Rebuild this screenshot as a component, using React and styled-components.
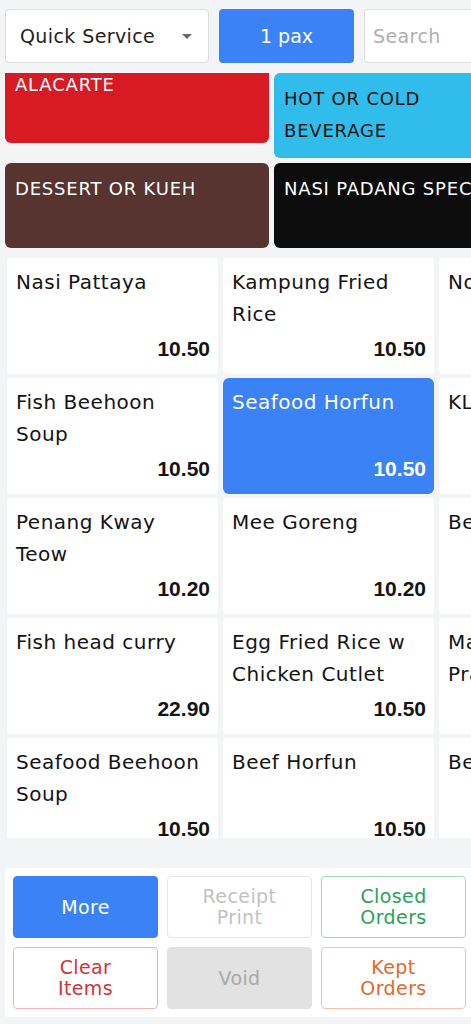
import styled, { createGlobalStyle } from 'styled-components'

const GlobalStyle = createGlobalStyle`
  * {
    box-sizing: border-box;
  }

  body {
    margin: 0;
    background: #f3f4f6;
    font-family: "DejaVu Sans", "Noto Sans", sans-serif;
  }
`

const categories = [
  { name: 'ALACARTE', bg: '#d71a24', color: '#fff', short: true },
  { name: 'HOT OR COLD BEVERAGE', bg: '#31bdeb', color: '#111' },
  { name: 'DESSERT OR KUEH', bg: '#573430', color: '#fff' },
  { name: 'NASI PADANG SPECIAL', bg: '#0c0c0c', color: '#fff' }
]

const items = [
  { name: 'Nasi Pattaya', price: '10.50' },
  { name: 'Kampung Fried Rice', price: '10.50' },
  { name: 'Nonya Mee Siam', price: '10.50' },
  { name: 'Fish Beehoon Soup', price: '10.50' },
  { name: 'Seafood Horfun', price: '10.50', active: true },
  { name: 'KL Hokkien Mee', price: '10.50' },
  { name: 'Penang Kway Teow', price: '10.20' },
  { name: 'Mee Goreng', price: '10.20' },
  { name: 'Beef Kway Teow', price: '10.50' },
  { name: 'Fish head curry', price: '22.90' },
  { name: 'Egg Fried Rice w Chicken Cutlet', price: '10.50' },
  { name: 'Mala Fried Rice w Prawns', price: '12.50' },
  { name: 'Seafood Beehoon Soup', price: '10.50' },
  { name: 'Beef Horfun', price: '10.50' },
  { name: 'Beef Noodles', price: '10.50' }
]

const actions = [
  { label: 'More', variant: 'primary' },
  { label: 'Receipt Print', variant: 'disabled' },
  { label: 'Closed Orders', variant: 'green' },
  { label: 'Clear Items', variant: 'red' },
  { label: 'Void', variant: 'grey' },
  { label: 'Kept Orders', variant: 'orange' }
]

const variants = {
  primary: { bg: '#3b82f6', border: '#3b82f6', color: '#fff' },
  disabled: { bg: '#fff', border: '#e6e6e6', color: '#c2c2c2' },
  green: { bg: '#fff', border: '#9fd9b4', color: '#2ea05a' },
  red: { bg: '#fff', border: '#f2b3b3', color: '#d2323a' },
  grey: { bg: '#e2e2e2', border: '#e2e2e2', color: '#a9a9a9' },
  orange: { bg: '#fff', border: '#f5c2a6', color: '#e0692c' }
}

export default function App() {
  return (
    <>
      <GlobalStyle />
      <Page>
        <TopBar>
          <Select>
            <span>Quick Service</span>
            <Caret />
          </Select>
          <PaxButton>1 pax</PaxButton>
          <SearchInput placeholder="Search" />
        </TopBar>

        <Categories>
          {categories.map((c) => (
            <CategoryTile key={c.name} $bg={c.bg} $color={c.color} $short={c.short}>
              {c.name}
            </CategoryTile>
          ))}
        </Categories>

        <MenuGrid>
          {items.map((item) => (
            <MenuItem key={item.name} $active={item.active}>
              <ItemName>{item.name}</ItemName>
              <ItemPrice>{item.price}</ItemPrice>
            </MenuItem>
          ))}
        </MenuGrid>

        <ActionPanel>
          {actions.map((a) => (
            <ActionButton key={a.label} $variant={a.variant}>
              {a.label}
            </ActionButton>
          ))}
        </ActionPanel>
      </Page>
    </>
  )
}

const Page = styled.div`
  display: flex;
  flex-direction: column;
  width: 471px;
  height: 1024px;
  overflow: hidden;
  background: #f3f4f6;
`

const TopBar = styled.div`
  display: flex;
  gap: 10px;
  padding: 9px 0 0 5px;
  height: 63px;
  flex-shrink: 0;
`

const Select = styled.div`
  display: flex;
  align-items: center;
  justify-content: space-between;
  width: 204px;
  flex-shrink: 0;
  padding: 0 16px 0 14px;
  background: #fff;
  border: 1px solid #dcdcdc;
  border-radius: 4px;
  font-size: 19px;
  letter-spacing: 0.4px;
  color: #222;
`

const Caret = styled.span`
  width: 0;
  height: 0;
  border-left: 5px solid transparent;
  border-right: 5px solid transparent;
  border-top: 5px solid #6b6b6b;
`

const PaxButton = styled.button`
  width: 135px;
  flex-shrink: 0;
  border: none;
  border-radius: 4px;
  background: #3b82f6;
  color: #fff;
  font-family: inherit;
  font-size: 19px;
`

const SearchInput = styled.input`
  width: 200px;
  flex-shrink: 0;
  padding: 0 8px;
  border: 1px solid #dcdcdc;
  border-radius: 4px;
  background: #fff;
  font-family: inherit;
  font-size: 19px;
  letter-spacing: 0.4px;
  outline: none;

  &::placeholder {
    color: #b0b0b0;
  }
`

const Categories = styled.div`
  display: grid;
  grid-template-columns: 264px 264px;
  grid-auto-rows: 85px;
  gap: 5px;
  padding: 10px 0 0 5px;
  flex-shrink: 0;
`

const CategoryTile = styled.div`
  align-self: start;
  height: ${(p) => (p.$short ? '70px' : '85px')};
  padding: ${(p) => (p.$short ? '0 10px' : '10px 24px 0 10px')};
  background: ${(p) => p.$bg};
  color: ${(p) => p.$color};
  border-radius: ${(p) => (p.$short ? '0 0 6px 6px' : '6px')};
  font-size: 18px;
  letter-spacing: 0.8px;
  line-height: ${(p) => (p.$short ? '24px' : '32px')};
  overflow: hidden;
`

const MenuGrid = styled.div`
  display: grid;
  grid-template-columns: repeat(3, 211px);
  grid-auto-rows: 116px;
  gap: 4px 5px;
  margin-top: 10px;
  padding-left: 7px;
  height: 580px;
  flex-shrink: 0;
  overflow: hidden;
`

const MenuItem = styled.div`
  display: flex;
  flex-direction: column;
  justify-content: space-between;
  padding: 8px 8px 12px 9px;
  border-radius: ${(p) => (p.$active ? '6px' : '4px')};
  background: ${(p) => (p.$active ? '#3b82f6' : '#fff')};
  color: ${(p) => (p.$active ? '#fff' : '#141414')};
`

const ItemName = styled.div`
  font-size: 20px;
  letter-spacing: 0.5px;
  line-height: 32px;
`

const ItemPrice = styled.div`
  text-align: right;
  font-family: "Liberation Sans", Arial, sans-serif;
  font-size: 21px;
  font-weight: 700;
  line-height: 26px;
`

const ActionPanel = styled.div`
  display: grid;
  grid-template-columns: repeat(3, 145px);
  grid-auto-rows: 62px;
  gap: 9px;
  margin: 30px 0 0 5px;
  padding: 8px;
  background: #fff;
  border-radius: 4px 0 0 4px;
  flex-shrink: 0;
`

const ActionButton = styled.button`
  display: flex;
  align-items: center;
  justify-content: center;
  padding: 0 20px;
  border: 1px solid ${(p) => variants[p.$variant].border};
  border-radius: 4px;
  background: ${(p) => variants[p.$variant].bg};
  color: ${(p) => variants[p.$variant].color};
  font-family: inherit;
  font-size: 19px;
  letter-spacing: 0.4px;
  line-height: 21px;
  text-align: center;
`
